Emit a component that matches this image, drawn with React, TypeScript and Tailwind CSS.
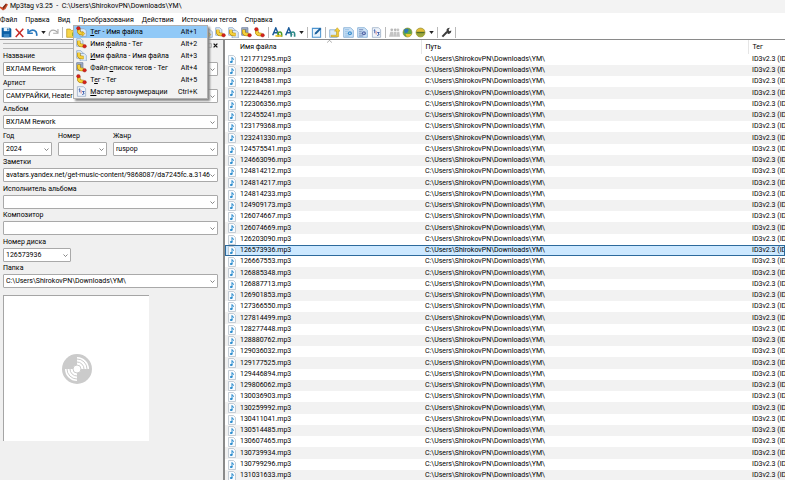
import React from "react";

const files = [
  "121771295", "122060988", "122184581", "122244261", "122306356", "122455241", "123179368", "123241330",
  "124575541", "124663096", "124814212", "124814217", "124814233", "124909173", "126074667", "126074669",
  "126203090", "126573936", "126667553", "126885348", "126887713", "126901853", "127366550", "127814499",
  "128277448", "128880762", "129036032", "129177525", "129446894", "129806062", "130036903", "130259992",
  "130411041", "130514485", "130607465", "130739934", "130799296", "131031633",
];
const path = "C:\\Users\\ShirokovPN\\Downloads\\YM\\";

type IconProps = { children: React.ReactNode };
const Icon = ({ children }: IconProps) => (
  <svg viewBox="0 0 16 16" className="block size-[11px] shrink-0" fill="none" aria-hidden="true">{children}</svg>
);

const Page = ({ x = 6, y = 4 }: { x?: number; y?: number }) => (
  <path d={`M${x} ${y}h6l3 3v8h-9z`} fill="#dfebf7" stroke="#7e9cc0" />
);
const Swoosh = () => (
  <>
    <path d="M4 4v3q0 4 5 4h2" stroke="#a97b00" strokeWidth="5" />
    <path d="M4 4v3q0 4 5 4h2" stroke="#f5d13c" strokeWidth="3.6" />
  </>
);
const TagRed = ({ x, y }: { x: number; y: number }) => <circle cx={x} cy={y} r="2.6" fill="#d8231b" stroke="#8d1510" strokeWidth=".6" />;

const TagToFile = () => <Icon><Page /><Swoosh /><TagRed x={3.5} y={3.2} /><path d="M9 8l4 3-4 4z" fill="#f5d13c" stroke="#a97b00" strokeWidth=".6" /></Icon>;
const FileToTag = () => <Icon><Page x={1} y={1} /><Swoosh /><TagRed x={12.5} y={12} /></Icon>;
const FileToFile = () => <Icon><Page x={1} y={1} /><Page x={6} y={5} /><Swoosh /></Icon>;
const ListToTag = () => <Icon><path d="M1 1h9v11H1z" fill="#a8b6cc" stroke="#5c6e90" /><path d="M3 4h5M3 6h5" stroke="#405a86" /><Swoosh /><TagRed x={12.5} y={12} /></Icon>;
const TagToTag = () => <Icon><Swoosh /><TagRed x={3.5} y={3.2} /><TagRed x={12.5} y={12} /></Icon>;
const Numbering = () => (
  <Icon>
    <path d="M2 1h9l3 3v11H2z" fill="#eef4fb" stroke="#8fa3be" />
    <path d="M4 5l1.5-1v5M9 8h3l-1.5 2L12 11l-3 1.500" stroke="#2b4fa3" strokeWidth="1.300" /><path d="M7.5 6v5" stroke="#d66" />
  </Icon>
);
const Save = () => <Icon><path d="M1 1h12l2 2v12H1z" fill="#0b5fa5" /><path d="M4 1h8v5H4z" fill="#e8f1f9" /><path d="M9 2h2v3H9z" fill="#0b5fa5" /><path d="M4 10h8v5H4z" fill="#3c86c2" /></Icon>;
const Remove = () => <Icon><path d="M2.5 2.5l11 12M13.5 2.5l-11 12" stroke="#c62b28" strokeWidth="2.2" /></Icon>;
const Undo = () => <Icon><path d="M1.5 3v6h7" stroke="#2878bd" strokeWidth="2.2" /><path d="M2 8q4-5 9-3 4 2 3 8" stroke="#2878bd" strokeWidth="2.4" /></Icon>;
const Redo = () => <Icon><path d="M14.500 3v6h-7" stroke="#aaa" strokeWidth="1.600" /><path d="M14 8Q10 3 5 5q-4 2-3 8" stroke="#aaa" strokeWidth="1.800" /></Icon>;
const Folder = () => <Icon><path d="M1 3h5l2 2h7v10H1z" fill="#f6d54a" stroke="#b99313" /><path d="M9 8h6v5H9z" fill="#79a92d" /></Icon>;
const LetterA = ({ green }: { green?: boolean }) => (
  <Icon>
    <path d="M1 12L5.500 1.500 10 12M3 8.500h5.500" stroke="#1c5c9a" strokeWidth="2.200" />
    <path d="M9 14V8q5-2 5 2v4" stroke={green ? "#4e9a28" : "#2d8a87"} strokeWidth="2.400" />
    {green && <path d="M5 13h9" stroke="#e9bf24" strokeWidth="2.400" />}
  </Icon>
);
const Edit = () => <Icon><path d="M2 2h12v13H2z" fill="#eaf4fc" stroke="#4d94cf" strokeWidth="1.500" /><path d="M5 11l1-3 7-7 2 2-7 7z" fill="#1b5f9b" /></Icon>;
const Playlist = () => <Icon><path d="M1 4h11v11H1z" fill="#dcecf9" stroke="#6f9cc6" /><path d="M3 12h8V6H8l4-5 4 5h-2v8H3z" fill="#f6cf37" stroke="#b48b0d" strokeWidth=".700" /></Icon>;
const DataPage = ({ dark }: { dark?: boolean }) => (
  <Icon>
    <path d="M1 1h10l4 4v10H1z" fill="#cfe4f7" stroke="#6c9fcd" />
    <path d="M3 4h6M3 7h4M3 10h4M3 13h6" stroke={dark ? "#485d9a" : "#73acdb"} />
    <circle cx="10" cy="9" r="3" fill={dark ? "#5268a9" : "#3c8fcf"} /><circle cx="10" cy="9" r="1" fill="#fff" />
  </Icon>
);
const People = () => <Icon><path d="M2 7h4v7H0zM7 7h4v7H6zM12 7h3l1 7h-5z" fill="#c4c4c4" /><circle cx="4" cy="4" r="2" fill="#b8b8b8" /><circle cx="9" cy="4" r="2" fill="#b8b8b8" /><circle cx="13" cy="4" r="2" fill="#c4c4c4" /></Icon>;
const Globe = ({ gold }: { gold?: boolean }) => (
  <Icon>
    <circle cx="8" cy="8" r="6.500" fill={gold ? "#e3bd35" : "#62a846"} stroke="#8f8d3d" />
    <path d={gold ? "M2 8h12q0 4-3 6H5Q2 12 2 8z" : "M3 4q4-3 7 0l-2 4-4 1z"} fill={gold ? "#9aa63d" : "#2d78b8"} />
    {gold ? <path d="M2 8h12" stroke="#506d2a" strokeWidth="2" /> : <path d="M5 10h9l-3 4H7z" fill="#edc533" />}
  </Icon>
);
const Wrench = () => <Icon><path d="M2 14l7-7" stroke="#3c3c3c" strokeWidth="3" /><path d="M8 5q0-4 5-4l-2 3 1 2 3-1q0 5-5 5z" fill="#3c3c3c" /></Icon>;
const Note = () => (
  <svg viewBox="0 0 16 20" className="block h-[10px] w-2" fill="none" aria-hidden="true">
    <path d="M1 1h10l4 4v14H1z" fill="#f8fbfe" stroke="#b3bdc8" strokeWidth="1.500" />
    <path d="M8 5v9M8 5q1 3 4 4" stroke="#2489cc" strokeWidth="2" /><ellipse cx="6.500" cy="14" rx="2.800" ry="2" fill="#2489cc" />
  </svg>
);

const Tool = ({ name, children }: { name: string; children: React.ReactNode }) => (
  <button aria-label={name} className="flex h-[13px] w-[13px] shrink-0 items-center justify-center">{children}</button>
);
const Caret = () => (
  <button aria-label="Ещё" className="flex h-[13px] w-2 shrink-0 items-center justify-center">
    <svg viewBox="0 0 6 4" className="h-[3px] w-[5px]"><path d="M0 0h6L3 4z" fill="#222" /></svg>
  </button>
);
const Sep = () => <span className="mx-[2px] h-[11px] w-px shrink-0 bg-[#b9b9b9]" />;

const Field = ({ label, value = "", className = "" }: { label: string; value?: string; className?: string }) => (
  <label className={`block min-w-0 ${className}`}>
    <span className="block h-[11px] leading-[11px]">{label}</span>
    <span className="relative block">
      <select className="block h-[14px] w-full appearance-none rounded-[1px] border border-[#a9a9a9] bg-white pl-[2px] pr-[7px] leading-3 outline-none">
        <option>{value}</option>
      </select>
      <svg viewBox="0 0 10 6" className="pointer-events-none absolute right-[3px] top-[6px] h-[3px] w-[5px]" fill="none"><path d="M1 1l4 4 4-4" stroke="#555" strokeWidth="1.400" /></svg>
    </span>
  </label>
);

const menuItems = [
  { icon: <TagToFile />, pre: "", key: "Т", rest: "ег - Имя файла", hot: "Alt+1" },
  { icon: <FileToTag />, pre: "Имя ", key: "ф", rest: "айла - Тег", hot: "Alt+2" },
  { icon: <FileToFile />, pre: "", key: "И", rest: "мя файла - Имя файла", hot: "Alt+3" },
  { icon: <ListToTag />, pre: "Файл-", key: "с", rest: "писок тегов - Тег", hot: "Alt+4" },
  { icon: <TagToTag />, pre: "Т", key: "е", rest: "г - Тег", hot: "Alt+5" },
  { icon: <Numbering />, pre: "", key: "М", rest: "астер автонумерации", hot: "Ctrl+K" },
];

const ConvertMenu = () => (
  <div role="menu" className="absolute left-[-5px] top-[11px] z-10 w-[135px] border border-[#b0b0b0] bg-[#f2f2f2] shadow-[2px_2px_2px_#888]">
    {menuItems.map((m, i) => (
      <button role="menuitem" key={m.hot} className={`flex h-3 w-full items-center pl-[2px] pr-[10px] leading-3 ${i === 0 ? "bg-[#91c9f7]" : ""}`}>
        {m.icon}
        <span className="ml-[3px] flex-1 whitespace-nowrap text-left">{m.pre}<u>{m.key}</u>{m.rest}</span>
        <span className="whitespace-nowrap">{m.hot}</span>
      </button>
    ))}
  </div>
);

export default function App() {
  return (
    <div className="flex h-screen flex-col overflow-hidden bg-white font-[Roboto,'Open_Sans',sans-serif] text-[7px] text-black">
      <header className="flex h-[13px] shrink-0 items-center gap-[2px] bg-[#f3f3f3]">
        <svg viewBox="0 0 16 16" className="size-2 shrink-0" aria-hidden="true"><path d="M0 7l5 2 7-8 4 2-5 9-5 3-6-5z" fill="#cf4a26" /><path d="M5 9l7-8 1 2-6 9z" fill="#6e2b1c" /></svg>
        <h1>Mp3tag v3.25&nbsp; -&nbsp; {path}</h1>
      </header>

      <nav className="flex h-[13px] shrink-0 items-center gap-2 leading-3">
        <button>Файл</button>
        <button>Правка</button>
        <button>Вид</button>
        <div className="relative">
          <button className="block">Преобразования</button>
          <ConvertMenu />
        </div>
        <button>Действия</button>
        <button>Источники тегов</button>
        <button>Справка</button>
      </nav>

      <div role="toolbar" className="flex h-[13px] shrink-0 items-center">
        <div className="flex w-[214px] shrink-0 items-center">
          <Tool name="Сохранить"><Save /></Tool>
          <Tool name="Удалить"><Remove /></Tool>
          <Tool name="Отменить"><Undo /></Tool>
          <Caret />
          <Tool name="Вернуть"><Redo /></Tool>
          <Sep />
          <Tool name="Открыть папку"><Folder /></Tool>
          <span className="flex-1" />
          <Tool name="Тег - Имя файла"><TagToFile /></Tool>
        </div>
        <Tool name="Имя файла - Тег"><FileToTag /></Tool>
        <Tool name="Имя файла - Имя файла"><FileToFile /></Tool>
        <Tool name="Файл-список - Тег"><ListToTag /></Tool>
        <Tool name="Тег - Тег"><TagToTag /></Tool>
        <Sep />
        <Tool name="Действия"><LetterA green /></Tool>
        <Tool name="Быстрые действия"><LetterA /></Tool>
        <Caret />
        <Sep />
        <Tool name="Правка тега"><Edit /></Tool>
        <Sep />
        <div className="flex gap-px">
          <Tool name="Плейлист"><Playlist /></Tool>
          <Tool name="Экспорт"><DataPage /></Tool>
          <Tool name="Расширенные теги"><DataPage dark /></Tool>
          <Tool name="Автонумерация"><Numbering /></Tool>
        </div>
        <Sep />
        <Tool name="Источники"><People /></Tool>
        <Tool name="Веб-поиск"><Globe /></Tool>
        <Tool name="Веб-источники"><Globe gold /></Tool>
        <Caret />
        <Sep />
        <Tool name="Настройки"><Wrench /></Tool>
        <Sep />
      </div>

      <div className="flex min-h-0 flex-1">
        <aside className="w-[223px] shrink-0 border-t border-[#8a8a8a] bg-[#f0f0f0] pl-[3px] pr-[5px]">
          <div className="flex h-[11px] items-center">
            <span className="h-[6px] flex-1 border-y border-[#b5b5b5]" />
            <button aria-label="Открепить панель" className="flex w-[6px] justify-center">
              <svg viewBox="0 0 8 8" className="size-[5px]" fill="none"><path d="M1 1h6v6H1z" stroke="#aaa" strokeWidth="1.500" /></svg>
            </button>
            <button aria-label="Закрыть панель" className="flex w-[6px] justify-center">
              <svg viewBox="0 0 8 8" className="size-[5px]"><path d="M1 1l6 6M7 1L1 7" stroke="#111" strokeWidth="2" /></svg>
            </button>
          </div>
          <div className="*:mb-[2px] [&>*:nth-child(2n)]:mb-px">
            <Field label="Название" value="ВХЛАМ Rework" />
            <Field label="Артист" value="САМУРАЙКИ, Heaters" />
            <Field label="Альбом" value="ВХЛАМ Rework" />
            <div className="flex gap-[6px]">
              <Field label="Год" value="2024" className="w-[49px]" />
              <Field label="Номер" className="w-[49px]" />
              <Field label="Жанр" value="ruspop" className="flex-1" />
            </div>
            <Field label="Заметки" value="avatars.yandex.net/get-music-content/9868087/da7245fc.a.3146" />
            <Field label="Исполнитель альбома" />
            <Field label="Композитор" />
            <Field label="Номер диска" value="126573936" className="w-[68px]" />
            <Field label="Папка" value={path} />
          </div>
          <div className="mt-[7px] flex size-[146px] items-center justify-center border-l border-t border-[#a5a5a5] bg-white">
            <svg viewBox="0 0 30 30" className="size-[30px]" fill="none" aria-label="Обложка">
              <circle cx="15" cy="15" r="15" fill="#cbcbcb" />
              <path d="M15 12V3a12 12 0 0 1 12 12h-9M15 18v9A12 12 0 0 1 3 15h9" fill="#fff" />
              <path d="M15 5a10 10 0 0 1 10 10M15 8a7 7 0 0 1 7 7M15 25A10 10 0 0 1 5 15M15 22a7 7 0 0 1-7-7" stroke="#cbcbcb" />
              <circle cx="15" cy="15" r="4" fill="#fff" stroke="#cbcbcb" />
            </svg>
          </div>
        </aside>

        <main className="min-w-0 flex-1 overflow-hidden border-l-2 border-t border-[#8a8a8a]">
          <table className="w-full table-fixed border-collapse whitespace-nowrap text-left leading-[11px]">
            <colgroup><col className="w-[15px]" /><col className="w-[181px]" /><col className="w-[327px]" /><col /></colgroup>
            <thead>
              <tr className="h-[14px]">
                <th className="p-0" />
                <th className="relative p-0 font-normal">
                  Имя файла
                  <svg viewBox="0 0 8 4" className="absolute left-[87px] top-0 h-[3px] w-[5px]" fill="none"><path d="M0 4l4-4 4 4" stroke="#777" /></svg>
                </th>
                <th className="border-l border-[#e5e5e5] p-0 pl-1 font-normal">Путь</th>
                <th className="border-l border-[#e5e5e5] p-0 pl-1 font-normal">Тег</th>
              </tr>
            </thead>
            <tbody>
              {files.map((f, i) => (
                <tr key={f} className={`h-[11px] [&:nth-child(4n)]:h-3 ${i === 17 ? "bg-[#cce8ff] outline-1 -outline-offset-1 outline-[#2c6a9c]" : i % 2 ? "bg-[#f2f2f2]" : "bg-white"}`}>
                  <td className="p-0 pl-[3px]"><Note /></td>
                  <td className="p-0">{f}.mp3</td>
                  <td className="p-0 pl-1">{path}</td>
                  <td className="p-0 pl-1">ID3v2.3 (ID</td>
                </tr>
              ))}
            </tbody>
          </table>
        </main>
      </div>
    </div>
  );
}
